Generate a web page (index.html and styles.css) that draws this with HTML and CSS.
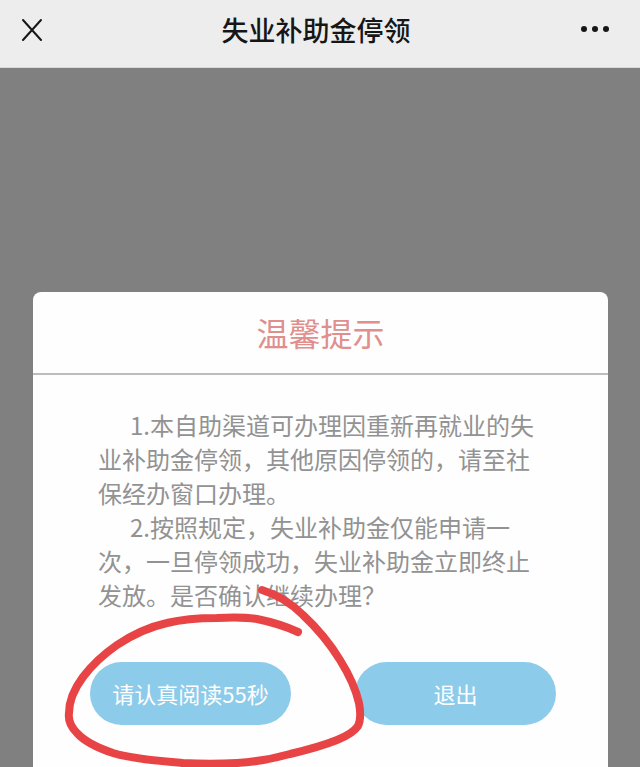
FILE: index.html
```html
<!doctype html>
<html lang="zh-CN">
  <head>
    <meta charset="utf-8">
    <meta name="viewport" content="width=device-width, initial-scale=1">
    <title>失业补助金停领</title>
    <link rel="stylesheet" href="styles.css">
  </head>
  <body>
    <header class="navbar">
      <button class="nav-btn" type="button" aria-label="关闭">
        <svg width="22" height="24" viewBox="0 0 22 24"><path d="M2 2 20 22M20 2 2 22"/></svg>
      </button>
      <h1>失业补助金停领</h1>
      <button class="nav-btn more" type="button" aria-label="更多">
        <svg width="30" height="24" viewBox="0 0 30 24"><circle cx="3" cy="11" r="3"/><circle cx="14" cy="11" r="3"/><circle cx="25" cy="11" r="3"/></svg>
      </button>
    </header>
    <main class="mask">
      <section class="dialog" role="dialog" aria-labelledby="dialog-title">
        <h2 id="dialog-title">温馨提示</h2>
        <div class="content">
          <p>1.本自助渠道可办理因重新再就业的失业补助金停领，其他原因停领的，请至社保经办窗口办理。</p>
          <p>2.按照规定，失业补助金仅能申请一次，一旦停领成功，失业补助金立即终止发放。是否确认继续办理？</p>
        </div>
        <div class="actions">
          <button type="button">请认真阅读55秒</button>
          <button type="button">退出</button>
          <svg class="mark" width="320" height="187" viewBox="0 0 320 187" aria-hidden="true">
            <path d="M209 10C225 15 237 22 250 35C265 49 276 62 287 80C297 96 303 110 306 123C308 134 308 140 305 146C301 152 294 156 284 160C269 166 254 170 237 174C219 179 202 182 184 183C166 184 148 184 130 183C106 181 80 179 60 173C45 168 32 162 24 153C18 147 15 140 16 133C16 121 21 109 30 97C39 85 51 74 64 65C79 55 96 47 114 43C130 39 147 38 164 38C179 37 192 37 204 39C219 42 232 46 245 52"/>
          </svg>
        </div>
      </section>
    </main>
  </body>
</html>
```
FILE: styles.css
```css
*,
*:before,
*:after {
  margin: 0;
  padding: 0;
  box-sizing: border-box;
}

body {
  display: flex;
  flex-direction: column;
  min-height: 100vh;
  background-color: #808080;
  font-family: "Noto Sans CJK SC", sans-serif;
}

button {
  border: 0;
  font-family: inherit;
  cursor: pointer;
}

/* top bar */
.navbar {
  display: flex;
  align-items: center;
  justify-content: space-between;
  height: 68px;
  padding: 0 29px 8px 21px;
  background-color: #ededed;
  border-bottom: 1px solid #d8d8d8;
}

.navbar h1 {
  color: #161616;
  font-size: 27px;
  font-weight: 500;
  line-height: 40px;
}

.nav-btn {
  display: flex;
  width: 30px;
  background: none;
}

.nav-btn svg {
  fill: none;
  stroke: #161616;
  stroke-width: 2;
  stroke-linecap: round;
}

.more svg {
  fill: #161616;
  stroke: none;
}

/* dialog */
.mask {
  display: flex;
  flex: 1;
  padding: 224px 32px 0 33px;
}

.dialog {
  flex: 1;
  background-color: #fefefe;
  border-radius: 8px 8px 0 0;
}

.dialog h2 {
  padding: 16px 0 17px;
  border-bottom: 2px solid #bcbcbc;
  color: #e08f8d;
  font-size: 32px;
  font-weight: 400;
  line-height: 48px;
  text-align: center;
}

.content {
  padding: 33px 65px 0;
  color: #929292;
  font-size: 24px;
  line-height: 34px;
}

.content p {
  text-indent: 32px;
}

.actions {
  position: relative;
  display: grid;
  grid-template-columns: 1fr 1fr;
  gap: 64px;
  padding: 50px 52px 42px 57px;
}

.actions button {
  height: 63px;
  padding-bottom: 2px;
  border-radius: 32px;
  background-color: #8dcbea;
  color: #fff;
  font-size: 22px;
  white-space: nowrap;
}

/* hand-drawn circle around the first button */
.mark {
  position: absolute;
  top: -32px;
  left: 20px;
  fill: none;
  stroke: #e84446;
  stroke-width: 8;
  stroke-linecap: round;
  stroke-linejoin: round;
  pointer-events: none;
}
```
